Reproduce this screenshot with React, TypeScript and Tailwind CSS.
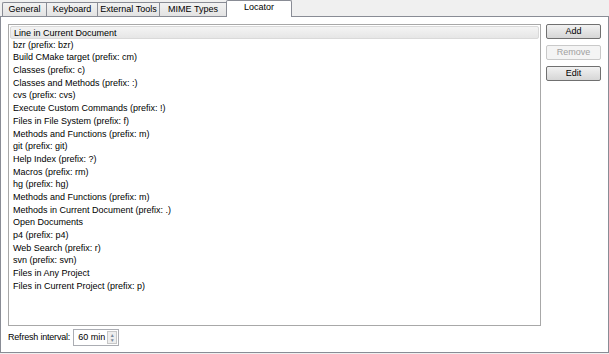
import React from "react";

const items = [
  "Line in Current Document",
  "bzr (prefix: bzr)",
  "Build CMake target (prefix: cm)",
  "Classes (prefix: c)",
  "Classes and Methods (prefix: :)",
  "cvs (prefix: cvs)",
  "Execute Custom Commands (prefix: !)",
  "Files in File System (prefix: f)",
  "Methods and Functions (prefix: m)",
  "git (prefix: git)",
  "Help Index (prefix: ?)",
  "Macros (prefix: rm)",
  "hg (prefix: hg)",
  "Methods and Functions (prefix: m)",
  "Methods in Current Document (prefix: .)",
  "Open Documents",
  "p4 (prefix: p4)",
  "Web Search (prefix: r)",
  "svn (prefix: svn)",
  "Files in Any Project",
  "Files in Current Project (prefix: p)",
];

const tabs = [
  { label: "General", w: "w-[44px]" },
  { label: "Keyboard", w: "w-[51px]" },
  { label: "External Tools", w: "w-[62px]" },
  { label: "MIME Types", w: "w-[67px]" },
];

function Button({ label, disabled }: { label: string; disabled?: boolean }) {
  return (
    <button
      className={
        "h-[15px] w-[55px] rounded-[2px] border text-[9px] leading-none whitespace-nowrap " +
        (disabled
          ? "border-[#c9c9c9] bg-[#f4f4f4] text-[#a0a0a0]"
          : "border-[#707070] bg-gradient-to-b from-[#f2f2f2] to-[#d6d6d6] text-black")
      }
    >
      {label}
    </button>
  );
}

export default function App() {
  return (
    <div
      className="h-[354px] w-[609px] bg-[#f0f0f0] text-black"
      style={{ fontFamily: '"Liberation Sans", Arial, sans-serif' }}
    >
      {/* tab strip */}
      <div className="flex h-[16px] items-end pl-[2px]">
        {tabs.map((t) => (
          <div
            key={t.label}
            className={
              t.w +
              " flex h-[14px] items-center justify-center whitespace-nowrap border border-b-0 border-r-0 border-[#898c95] bg-gradient-to-b from-[#f2f2f2] to-[#e3e3e3] text-[9px] first:rounded-tl-[2px]"
            }
          >
            {t.label}
          </div>
        ))}
        <div className="relative z-10 -mb-px flex h-[17px] w-[66px] items-center justify-center rounded-t-[2px] border border-b-0 border-[#898c95] bg-white pb-[2px] text-[9px]">
          Locator
        </div>
      </div>

      {/* pane */}
      <div className="flex h-[337px] w-[609px] flex-col border border-[#898c95] bg-white px-[7px] pt-[7px]">
        <div className="flex gap-[5px]">
          <div className="h-[302px] w-[533px] border border-[#a8a8a8] bg-white pt-px pl-px pr-px">
            {items.map((it, i) => (
              <div
                key={i}
                className={
                  "h-[12.7px] pl-[3px] text-[9px] leading-[12.7px] whitespace-nowrap " +
                  (i === 0
                    ? "rounded-[2px] border border-[#d9d9d9] bg-gradient-to-b from-[#f4f4f4] to-[#e6e6e6] leading-[10.7px]"
                    : "")
                }
              >
                {it}
              </div>
            ))}
          </div>
          <div className="flex flex-col gap-[6px]">
            <Button label="Add" />
            <Button label="Remove" disabled />
            <Button label="Edit" />
          </div>
        </div>

        <div className="mt-[3px] flex items-center gap-[3px] text-[9px] whitespace-nowrap">
          <span className="tracking-[-0.2px]">Refresh interval:</span>
          <div className="flex h-[17px] w-[46px] items-center border border-[#abadb3] bg-white pl-[4px]">
            <span className="flex-1">60 min</span>
            <div className="mr-px flex h-[13px] w-[10px] flex-col justify-center border border-[#c7c7c7] bg-[#eeeeee] text-[5px] leading-[5px] text-[#7b8a9b]">
              <span className="text-center">▲</span>
              <span className="text-center">▼</span>
            </div>
          </div>
        </div>
      </div>
    </div>
  );
}
